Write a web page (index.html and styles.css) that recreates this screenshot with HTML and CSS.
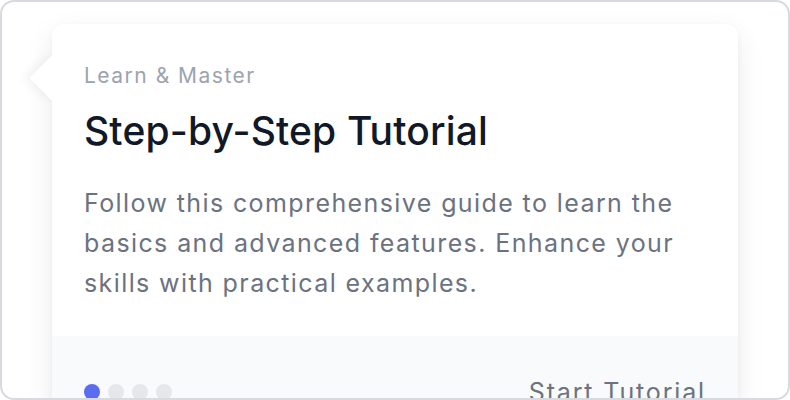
FILE: index.html
```html
<!DOCTYPE html>
<html lang="en">
<head>
    <meta charset="UTF-8">
    <meta name="viewport" content="width=device-width, initial-scale=1.0">
    <title>Tutorial Popover</title>
    <link rel="stylesheet" href="styles.css">
</head>
<body>
    <div class="frame">
        <div class="popover">
            <span class="popover-arrow"></span>
            <div class="popover-body">
                <p class="eyebrow">Learn &amp; Master</p>
                <h2 class="title">Step-by-Step Tutorial</h2>
                <p class="text">Follow this comprehensive guide to learn the basics and advanced features. Enhance your skills with practical examples.</p>
            </div>
            <div class="popover-footer">
                <div class="dots">
                    <span class="dot active"></span>
                    <span class="dot"></span>
                    <span class="dot"></span>
                    <span class="dot"></span>
                </div>
                <button class="start">Start Tutorial</button>
            </div>
        </div>
    </div>
</body>
</html>
```

FILE: styles.css
```css
body {
    margin: 0;
    padding: 0;
    font-family: Inter, "Noto Sans", sans-serif;
    background-color: #fff;
}
.frame {
    box-sizing: border-box;
    width: 790px;
    height: 400px;
    border: 2px solid #d7dade;
    border-radius: 14px;
    padding: 22px 50px 0 50px;
    overflow: hidden;
    background-color: #fff;
}
.popover {
    position: relative;
    background-color: #fff;
    border-radius: 12px;
    box-shadow: 0 10px 30px rgba(0, 0, 0, 0.08), 0 2px 6px rgba(0, 0, 0, 0.04);
}
.popover-arrow {
    position: absolute;
    left: -16px;
    top: 38px;
    width: 32px;
    height: 32px;
    background-color: #fff;
    transform: rotate(45deg);
    box-shadow: -4px 4px 10px rgba(0, 0, 0, 0.05);
}
.popover-body {
    position: relative;
    padding: 38px 32px 33px 32px;
    background-color: #fff;
    border-radius: 12px 12px 0 0;
}
.eyebrow {
    margin: 0;
    font-size: 21px;
    line-height: 28px;
    letter-spacing: 1.5px;
    color: #9ca3af;
}
.title {
    margin: 17px 0 0;
    font-size: 39px;
    line-height: 48px;
    font-weight: 500;
    letter-spacing: 0.15px;
    color: #111827;
}
.text {
    margin: 28px 0 0;
    font-size: 25px;
    line-height: 40px;
    letter-spacing: 1.4px;
    color: #6b7280;
}
.popover-footer {
    display: flex;
    align-items: center;
    justify-content: space-between;
    padding: 40px 32px 24px 32px;
    background-color: #f9fafb;
}
.dots {
    display: flex;
    gap: 8px;
}
.dot {
    width: 16px;
    height: 16px;
    border-radius: 50%;
    background-color: #e5e7eb;
}
.dot.active {
    background-color: #5b6cf0;
}
.start {
    border: none;
    background: none;
    padding: 0;
    font-family: inherit;
    font-size: 25px;
    line-height: 32px;
    letter-spacing: 1.85px;
    color: #6b7280;
    cursor: pointer;
}
```
